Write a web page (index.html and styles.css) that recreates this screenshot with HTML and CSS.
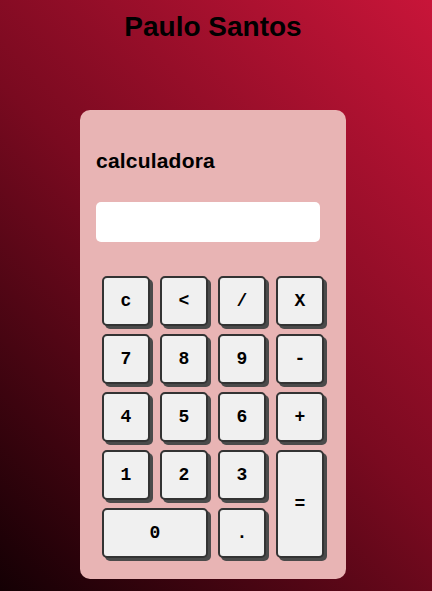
FILE: index.html
```html
<!DOCTYPE html>
<html lang="pt">
<head>
<meta charset="utf-8">
<title>Calculadora</title>
<link rel="stylesheet" href="styles.css">
</head>
<body>
<div class="page">
  <h1 class="name">Paulo Santos</h1>
  <div class="card">
    <h2 class="card-title">calculadora</h2>
    <div class="display"></div>
    <div class="keys">
      <button class="key">c</button>
      <button class="key">&lt;</button>
      <button class="key">/</button>
      <button class="key">X</button>
      <button class="key">7</button>
      <button class="key">8</button>
      <button class="key">9</button>
      <button class="key">-</button>
      <button class="key">4</button>
      <button class="key">5</button>
      <button class="key">6</button>
      <button class="key">+</button>
      <button class="key">1</button>
      <button class="key">2</button>
      <button class="key">3</button>
      <button class="key key-equals">=</button>
      <button class="key key-zero">0</button>
      <button class="key">.</button>
    </div>
  </div>
</div>
</body>
</html>
```
FILE: styles.css
```css
html, body {
  margin: 0;
  height: 100%;
}
body {
  background: linear-gradient(45deg, #140004 0%, #7a0a20 50%, #c81539 100%);
  font-family: "Liberation Sans", Arial, sans-serif;
  overflow: hidden;
}
.page {
  display: flex;
  flex-direction: column;
  align-items: center;
  padding: 11px 6px 0 0;
}
.name {
  margin: 0;
  font-size: 28px;
  font-weight: bold;
  color: #000;
  line-height: 32px;
}
.card {
  margin-top: 67px;
  width: 266px;
  box-sizing: border-box;
  background: #e8b4b4;
  border-radius: 10px;
  padding: 39px 26px 21px 16px;
}
.card-title {
  margin: 0;
  font-size: 21px;
  line-height: 24px;
  font-weight: bold;
  color: #000;
  letter-spacing: 0.2px;
}
.display {
  margin-top: 29px;
  height: 40px;
  background: #fff;
  border-radius: 5px;
}
.keys {
  margin-top: 34px;
  padding-left: 6px;
  display: grid;
  grid-template-columns: repeat(4, 48px);
  grid-auto-rows: 50px;
  column-gap: 10px;
  row-gap: 8px;
}
.key {
  box-sizing: border-box;
  margin: 0;
  padding: 0;
  background: #f0f0f0;
  border: 2px solid #333;
  border-radius: 5px;
  box-shadow: 3px 3px 0 #4a4a4a;
  font-family: "Liberation Mono", "Courier New", monospace;
  font-weight: bold;
  font-size: 18px;
  color: #000;
}
.key-equals {
  grid-column: 4;
  grid-row: 4 / span 2;
}
.key-zero {
  grid-column: 1 / span 2;
}
```
